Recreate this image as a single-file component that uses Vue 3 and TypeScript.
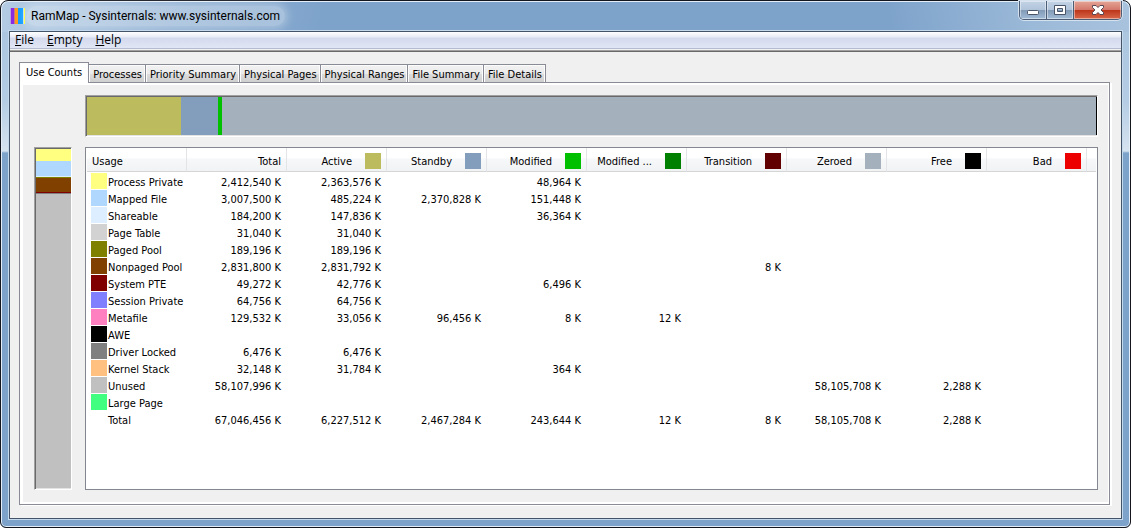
<script setup lang="ts">
interface Column { label: string; color?: string }
interface Row { name: string; color?: string; values: string[] }

const menus: string[] = ['File', 'Empty', 'Help']
const tabs: string[] = ['Use Counts', 'Processes', 'Priority Summary', 'Physical Pages', 'Physical Ranges', 'File Summary', 'File Details']

const columns: Column[] = [
  { label: 'Total' },
  { label: 'Active', color: '#bcbc5e' },
  { label: 'Standby', color: '#839dbc' },
  { label: 'Modified', color: '#00c000' },
  { label: 'Modified ...', color: '#008000' },
  { label: 'Transition', color: '#600000' },
  { label: 'Zeroed', color: '#a4b0bc' },
  { label: 'Free', color: '#000000' },
  { label: 'Bad', color: '#ec0000' },
]

const rows: Row[] = [
  { name: 'Process Private', color: '#ffff80', values: ['2,412,540 K', '2,363,576 K', '', '48,964 K', '', '', '', '', ''] },
  { name: 'Mapped File', color: '#b0d8ff', values: ['3,007,500 K', '485,224 K', '2,370,828 K', '151,448 K', '', '', '', '', ''] },
  { name: 'Shareable', color: '#dceeff', values: ['184,200 K', '147,836 K', '', '36,364 K', '', '', '', '', ''] },
  { name: 'Page Table', color: '#d2d2d2', values: ['31,040 K', '31,040 K', '', '', '', '', '', '', ''] },
  { name: 'Paged Pool', color: '#808000', values: ['189,196 K', '189,196 K', '', '', '', '', '', '', ''] },
  { name: 'Nonpaged Pool', color: '#804000', values: ['2,831,800 K', '2,831,792 K', '', '', '', '8 K', '', '', ''] },
  { name: 'System PTE', color: '#800000', values: ['49,272 K', '42,776 K', '', '6,496 K', '', '', '', '', ''] },
  { name: 'Session Private', color: '#8080ff', values: ['64,756 K', '64,756 K', '', '', '', '', '', '', ''] },
  { name: 'Metafile', color: '#ff80c0', values: ['129,532 K', '33,056 K', '96,456 K', '8 K', '12 K', '', '', '', ''] },
  { name: 'AWE', color: '#000000', values: ['', '', '', '', '', '', '', '', ''] },
  { name: 'Driver Locked', color: '#808080', values: ['6,476 K', '6,476 K', '', '', '', '', '', '', ''] },
  { name: 'Kernel Stack', color: '#ffc080', values: ['32,148 K', '31,784 K', '', '364 K', '', '', '', '', ''] },
  { name: 'Unused', color: '#c0c0c0', values: ['58,107,996 K', '', '', '', '', '', '58,105,708 K', '2,288 K', ''] },
  { name: 'Large Page', color: '#40ff80', values: ['', '', '', '', '', '', '', '', ''] },
  { name: 'Total', values: ['67,046,456 K', '6,227,512 K', '2,467,284 K', '243,644 K', '12 K', '8 K', '58,105,708 K', '2,288 K', ''] },
]

const stateShares = [
  { color: '#bcbc5e', share: 6227512 },
  { color: '#839dbc', share: 2467284 },
  { color: '#00c000', share: 243656 },
  { color: '#a4b0bc', share: 58105708 },
  { color: '#000000', share: 60000 },
]

const usageShares = [
  { color: '#ffff80', share: 12 },
  { color: '#b0d8ff', share: 15 },
  { color: '#dceeff', share: 1 },
  { color: '#808000', share: 1 },
  { color: '#804000', share: 14 },
  { color: '#800000', share: 1 },
  { color: '#808080', share: 1 },
  { color: '#c0c0c0', share: 293 },
]
</script>

<template>
  <div class="window">
    <header class="titlebar">
      <svg class="app-icon" width="16" height="16" viewBox="0 0 16 16" aria-hidden="true">
        <rect width="1" height="16" fill="#b9a0e0" />
        <rect x="1" width="3" height="16" fill="#8a2be2" />
        <rect x="4" width="1" height="16" fill="#c07890" />
        <rect x="5" width="3" height="16" fill="#ff9a1a" />
        <rect x="8" width="5" height="16" fill="#0f9bff" />
        <rect x="13" width="1" height="16" fill="#c8e0e0" />
        <rect x="14" width="1" height="16" fill="#ffff30" />
      </svg>
      <h1 class="title">RamMap - Sysinternals: www.sysinternals.com</h1>
      <div class="controls">
        <button type="button" class="control" aria-label="Minimize">
          <svg width="12" height="14" viewBox="0 0 12 14"><rect x="0.5" y="7.5" width="11" height="4" rx="1" fill="#fff" stroke="#4a5468" /></svg>
        </button>
        <button type="button" class="control" aria-label="Maximize">
          <svg width="12" height="14" viewBox="0 0 12 14"><path d="M.5 2.5h11v9H.5zM3.5 5.5v3h5v-3z" fill="#fff" fill-rule="evenodd" stroke="#4a5468" /></svg>
        </button>
        <button type="button" class="control close" aria-label="Close">
          <svg width="12" height="14" viewBox="0 0 12 14"><path d="M.5 2.5h3.500L6 4.500l2-2h3.500v2L9 7l2.500 2.500v2H8l-2-2-2 2H.5v-2L3 7 .5 4.500z" fill="#fff" stroke="#5a4650" stroke-linejoin="round" /></svg>
        </button>
      </div>
    </header>

    <div class="client">
      <nav class="menubar" aria-label="Menu">
        <button v-for="m in menus" :key="m" type="button" class="menu"><u>{{ m[0] }}</u>{{ m.slice(1) }}</button>
      </nav>
      <main class="content">
        <div class="tabs" role="tablist">
          <button v-for="(t, i) in tabs" :key="t" type="button" role="tab" :aria-selected="i === 0" class="tab" :class="{ selected: i === 0 }">{{ t }}</button>
        </div>
        <section class="page">
          <div class="state-bar sunken">
            <span v-for="s in stateShares" :key="s.color" :style="{ flexGrow: s.share, background: s.color }"></span>
          </div>
          <div class="usage-bar sunken">
            <span v-for="s in usageShares" :key="s.color" :style="{ flexGrow: s.share, background: s.color }"></span>
          </div>
          <div class="list">
            <table>
              <colgroup>
                <col v-for="n in 10" :key="n" class="fixed" />
                <col />
              </colgroup>
              <thead>
                <tr>
                  <th scope="col" class="usage"><div class="head first"><span>Usage</span></div></th>
                  <th v-for="c in columns" :key="c.label" scope="col">
                    <div class="head"><span>{{ c.label }}</span><i v-if="c.color" class="swatch" :style="{ background: c.color }"></i></div>
                  </th>
                  <td class="filler"></td>
                </tr>
              </thead>
              <tbody>
                <tr v-for="r in rows" :key="r.name">
                  <th scope="row"><div class="name"><i class="swatch" :style="{ background: r.color }"></i><span>{{ r.name }}</span></div></th>
                  <td v-for="(v, i) in r.values" :key="i">{{ v }}</td>
                  <td></td>
                </tr>
              </tbody>
            </table>
          </div>
        </section>
      </main>
    </div>
  </div>
</template>

<style>
html, body, #app { height: 100%; }
body { margin: 0; background: #fff; }
</style>

<style scoped>
* { box-sizing: border-box; }
.window {
  display: flex;
  flex-direction: column;
  min-height: 100%;
  padding: 0 8px 8px;
  border: 1px solid #14161e;
  border-radius: 8px 8px 6px 6px;
  box-shadow: inset 0 0 0 1px #e4eef8;
  background:
    linear-gradient(100deg, #b4cce4 0, #8fb0d3 180px, transparent 320px) 0 0 / 100% 31px no-repeat,
    linear-gradient(260deg, #a9c3de 0, #9bb9d8 100px, transparent 240px) 0 0 / 100% 31px no-repeat,
    linear-gradient(#a9c3de 0, #b4cce4 100px, #d6e3f0 150px, #7ea3cb 152px) 0 0 / 9px 100% no-repeat,
    linear-gradient(#a9c3de 0, #b4cce4 100px, #d6e3f0 150px, #7ea3cb 152px) 100% 0 / 9px 100% no-repeat,
    #7ea3cb;
  font-family: "DejaVu Sans Condensed", Tahoma, "Noto Sans", sans-serif;
  font-size: 11px;
  line-height: 16px;
  color: #000;
}
button { font: inherit; color: inherit; margin: 0; }
.titlebar { display: flex; align-items: flex-start; height: 29px; padding-left: 1px; }
.app-icon { margin-top: 7px; }
.title {
  margin: 5px 0 0;
  padding: 0 5px;
  font-family: Roboto, "Segoe UI", sans-serif;
  font-size: 12px;
  font-weight: 400;
  line-height: 20px;
  border-radius: 10px;
  background: rgba(255, 255, 255, 0.3);
  box-shadow: 0 0 8px 3px rgba(255, 255, 255, 0.3);
}
.controls {
  display: flex;
  margin-left: auto;
  border: 1px solid #4c5e76;
  border-top: 0;
  border-radius: 0 0 5px 5px;
  box-shadow: 0 0 0 1px #d4e2f0;
  overflow: hidden;
}
.control {
  display: flex;
  align-items: center;
  justify-content: center;
  width: 27px;
  height: 18px;
  padding: 0;
  border: 0;
  border-right: 1px solid #4c5e76;
  box-shadow: inset 0 0 0 1px rgba(255, 255, 255, 0.45);
  background: linear-gradient(#c3d3e5 0, #b0c4da 48%, #8199b5 50%, #a1bbd6 100%);
}
.close { width: 47px; border-right: 0; background: linear-gradient(#e3a598 0, #d4786a 48%, #bb3419 50%, #d9684a 100%); }
.client {
  flex: 1;
  display: flex;
  flex-direction: column;
  border: 1px solid #435468;
  outline: 1px solid #c4d9ec;
  background: #f0f0f0;
  margin-top: 1px;
}
.menubar {
  display: flex;
  height: 17px;
  border-bottom: 1px solid #b4bcd0;
  background: linear-gradient(#fff 0, #e8ebf6 5px, #d4daed 6px, #e1e6f5 100%);
}
.menu {
  padding: 0 7px 0 6px;
  border: 0;
  background: none;
  font-family: "Open Sans", "Segoe UI", sans-serif;
  font-size: 12px;
  line-height: 16px;
}
.menu:first-child { padding-left: 5px; }
.content {
  flex: 1;
  display: flex;
  flex-direction: column;
  margin-top: 1px;
  padding: 11px 11px 13px 9px;
  border-top: 1px solid #a0a0a0;
  box-shadow: inset 0 1px #696969;
}
.tabs { display: flex; align-items: flex-end; height: 20px; }
.tab {
  height: 18px;
  padding: 2px 3px 0 4px;
  border: 1px solid #898c95;
  border-left-width: 0;
  border-bottom: 0;
  background: linear-gradient(#f2f2f2 0, #ebebeb 50%, #dddddd 51%, #cfcfcf 100%);
  box-shadow: inset 1px 1px #fcfcfc, inset -1px 0 #fcfcfc;
  white-space: nowrap;
}
.tab.selected {
  height: 21px;
  margin-bottom: -1px;
  padding: 0 6px;
  border-left-width: 1px;
  background: #fff;
  z-index: 1;
}
.page {
  flex: 1;
  display: grid;
  grid-template-columns: 38px minmax(0, 1fr);
  grid-template-rows: 42px minmax(342px, 1fr);
  gap: 10px 13px;
  padding: 12px 11px 14px 14px;
  border: 1px solid #898c95;
  box-shadow: inset 3px 2px #fff, inset -1px -2px #fff, 2px 1px #fff;
}
.sunken {
  display: flex;
  border: 1px solid;
  border-color: #a0a0a0 #fff #fff #a0a0a0;
  padding: 1px 0 1px 1px;
  background: linear-gradient(#696969, #696969) 0 0 / 100% 50% no-repeat, linear-gradient(90deg, #696969 1px, #e3e3e3 1px);
}
.state-bar { grid-column: 2; }
.usage-bar { flex-direction: column; }
.list { border: 1px solid #828790; background: #fff; padding: 0 1px; }
table { width: 100%; table-layout: fixed; border-collapse: separate; border-spacing: 0; }
.fixed { width: 100px; }
th, td { height: 17px; padding: 5px 6px 0 0; font-weight: 400; line-height: 12px; text-align: right; white-space: nowrap; }
thead th, thead .filler {
  height: 24px;
  border-right: 1px solid #e2e4e8;
  border-bottom: 1px solid #d5d5d5;
  padding: 2px 5px 0 0;
  background: linear-gradient(#fff 0, #fff 45%, #f7f8fa 46%, #f1f2f4 100%);
}
thead .filler { border-right: 0; }
.head { display: flex; justify-content: flex-end; gap: 13px; height: 16px; line-height: 18px; }
.first { justify-content: flex-start; padding-left: 5px; }
.swatch { width: 16px; height: 16px; flex: none; }
tbody th { padding: 1px 0 0 4px; }
.name { display: flex; gap: 1px; height: 16px; line-height: 12px; }
.name span { padding-top: 4px; }
</style>
